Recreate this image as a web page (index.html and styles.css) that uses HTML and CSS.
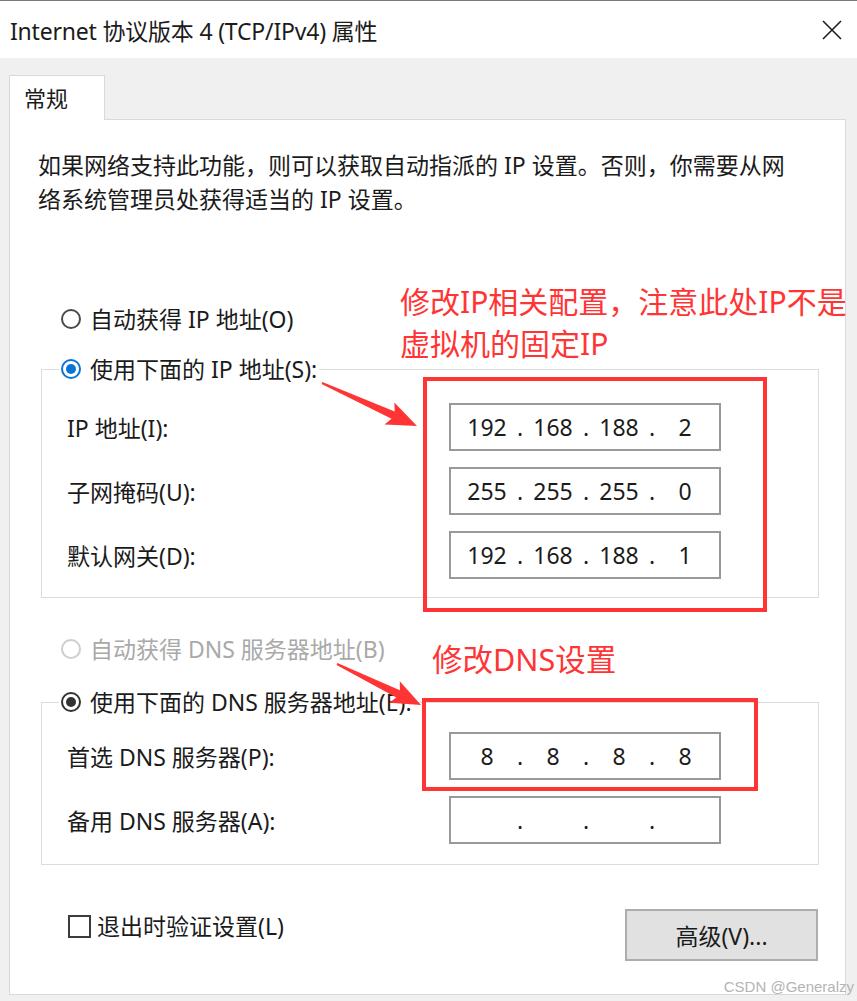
FILE: index.html
```html
<!DOCTYPE html>
<html>
<head>
  <meta charset="UTF-8">
  <link rel="stylesheet" href="styles.css">
</head>
<body>
  <div class="titlebar">
    <span class="title">Internet 协议版本 4 (TCP/IPv4) 属性</span>
    <svg class="close" width="20" height="20" viewBox="0 0 20 20">
      <path d="M1 1 L19 19 M19 1 L1 19" stroke="#1e1e1e" stroke-width="1.6" fill="none"/>
    </svg>
  </div>

  <div class="dialog">
    <div class="tabs">
      <div class="tab">常规</div>
    </div>

    <div class="panel">
      <p class="intro">如果网络支持此功能，则可以获取自动指派的 IP 设置。否则，你需要从网<br>络系统管理员处获得适当的 IP 设置。</p>

      <label class="radio-row first">
        <span class="radio"></span>自动获得 IP 地址(O)
      </label>

      <fieldset class="group ip-group">
        <legend class="radio-row">
          <span class="radio on"></span>使用下面的 IP 地址(S):
        </legend>
        <div class="fields">
          <span class="field-label">IP 地址(I):</span>
          <div class="ip-box"><span>192</span><i>.</i><span>168</span><i>.</i><span>188</span><i>.</i><span>2</span></div>
          <span class="field-label">子网掩码(U):</span>
          <div class="ip-box"><span>255</span><i>.</i><span>255</span><i>.</i><span>255</span><i>.</i><span>0</span></div>
          <span class="field-label">默认网关(D):</span>
          <div class="ip-box"><span>192</span><i>.</i><span>168</span><i>.</i><span>188</span><i>.</i><span>1</span></div>
        </div>
      </fieldset>

      <label class="radio-row disabled dns-auto">
        <span class="radio"></span>自动获得 DNS 服务器地址(B)
      </label>

      <fieldset class="group dns-group">
        <legend class="radio-row">
          <span class="radio on dark"></span>使用下面的 DNS 服务器地址(E):
        </legend>
        <div class="fields">
          <span class="field-label">首选 DNS 服务器(P):</span>
          <div class="ip-box"><span>8</span><i>.</i><span>8</span><i>.</i><span>8</span><i>.</i><span>8</span></div>
          <span class="field-label">备用 DNS 服务器(A):</span>
          <div class="ip-box"><span></span><i>.</i><span></span><i>.</i><span></span><i>.</i><span></span></div>
        </div>
      </fieldset>

      <div class="bottom-row">
        <label class="check-row"><span class="checkbox"></span>退出时验证设置(L)</label>
        <button class="btn">高级(V)...</button>
      </div>

      <!-- red notes drawn over the dialog -->
      <div class="note note-ip">修改IP相关配置，注意此处IP不是<br>虚拟机的固定IP</div>
      <div class="note note-dns">修改DNS设置</div>
      <div class="red-box box-ip"></div>
      <div class="red-box box-dns"></div>
      <svg class="arrows" width="837" height="875" viewBox="10 121 837 875">
        <polygon fill="#ff3535" points="322.4,383.1 394.7,412.5 394.4,403.6 417,427 384.6,425.4 391.5,419.7 321.6,384.9"/>
        <polygon fill="#ff3535" points="337.4,664.1 399.9,691.2 399.8,682.2 421,706 389.2,703.8 396.3,698.4 336.6,665.9"/>
      </svg>
    </div>
  </div>

  <div class="watermark">CSDN @Generalzy</div>
</body>
</html>
```

FILE: styles.css
```css
body{
  margin: 0;
  background-color: #f0f0f0;
  font-family: "Noto Sans", "Noto Sans CJK SC", sans-serif;
  font-size: 23px;
  color: #1b1b1b;
  width: 857px;
  height: 1001px;
  overflow: hidden;
  position: relative;
}
.titlebar{
  height: 57px;
  background-color: white;
  border-top: 1px solid #7a7a7a;
  display: flex;
  align-items: center;
  justify-content: space-between;
  padding: 0 15px 0 10px;
}
.title{
  font-size: 23px;
  letter-spacing: -0.2px;
}
.dialog{
  padding: 17px 11px 0 9px;
}
.tabs{
  display: flex;
}
.tab{
  width: 80px;
  height: 44px;
  padding-left: 14px;
  line-height: 44px;
  font-size: 22px;
  background-color: white;
  border: 1px solid #d9d9d9;
  border-bottom: none;
  position: relative;
  z-index: 1;
  margin-bottom: -1px;
}
.panel{
  position: relative;
  height: 874px;
  background-color: white;
  border: 1px solid #d9d9d9;
}
.intro{
  margin: 0;
  padding: 28px 0 0 28px;
  line-height: 34px;
  white-space: nowrap;
}
.radio-row{
  display: flex;
  align-items: center;
  gap: 9px;
  line-height: 34px;
  white-space: nowrap;
}
.radio-row.first{
  margin: 86px 0 0 51px;
}
.radio{
  width: 16px;
  height: 16px;
  border: 2px solid #4a4a4a;
  border-radius: 50%;
  position: relative;
  flex: none;
}
.radio.on{
  border-color: #0a74d6;
}
.radio.on::after{
  content: "";
  position: absolute;
  left: 3px;
  top: 3px;
  width: 10px;
  height: 10px;
  border-radius: 50%;
  background-color: #0a74d6;
}
.radio.on.dark{
  border-color: #333;
}
.radio.on.dark::after{
  background-color: #333;
}
.disabled{
  color: #a9a9a9;
}
.disabled .radio{
  border-color: #cdcdcd;
}
.group{
  margin: 16px 0 0 31px;
  width: 776px;
  padding: 0;
  border: 1px solid #dcdcdc;
}
.group legend{
  margin-left: 17px;
  padding: 0 2px;
}
.fields{
  display: grid;
  grid-template-columns: 382px 272px;
  grid-auto-rows: 48px;
  row-gap: 16px;
  align-items: center;
  padding: 17px 0 18px 25px;
  white-space: nowrap;
}
.ip-box{
  box-sizing: border-box;
  width: 272px;
  height: 48px;
  border: 2px solid #999;
  display: flex;
  align-items: center;
  padding-left: 10px;
}
.ip-box span{
  width: 52px;
  text-align: center;
}
.ip-box i{
  font-style: normal;
  width: 14px;
  text-align: center;
}
.dns-auto{
  margin: 34px 0 0 51px;
}
.dns-group{
  margin-top: 19px;
}
.dns-group .fields{
  padding-top: 13px;
  padding-bottom: 20px;
}
.bottom-row{
  display: flex;
  justify-content: space-between;
  align-items: flex-start;
  margin-top: 44px;
  padding: 0 27px 0 58px;
}
.check-row{
  display: flex;
  align-items: center;
  gap: 6px;
  line-height: 34px;
}
.checkbox{
  width: 19px;
  height: 19px;
  border: 2px solid #3c3c3c;
}
.btn{
  width: 193px;
  height: 52px;
  background-color: #e1e1e1;
  border: 2px solid #adadad;
  font-family: inherit;
  font-size: 23px;
  color: #1b1b1b;
}
.note{
  position: absolute;
  color: #ff3535;
  font-size: 30px;
  line-height: 42px;
  white-space: nowrap;
}
.note-ip{
  left: 390px;
  top: 161px;
}
.note-dns{
  left: 422px;
  top: 518px;
  font-size: 30.5px;
}
.red-box{
  position: absolute;
  border: 4px solid #ff3535;
}
.box-ip{
  left: 413px;
  top: 257px;
  width: 336px;
  height: 227px;
}
.box-dns{
  left: 412px;
  top: 578px;
  width: 328px;
  height: 85px;
}
.arrows{
  position: absolute;
  left: 0;
  top: 0;
  pointer-events: none;
}
.watermark{
  position: absolute;
  right: 3px;
  bottom: 6px;
  font-family: "Liberation Sans", sans-serif;
  font-size: 15px;
  color: #b4b4b4;
}
```
